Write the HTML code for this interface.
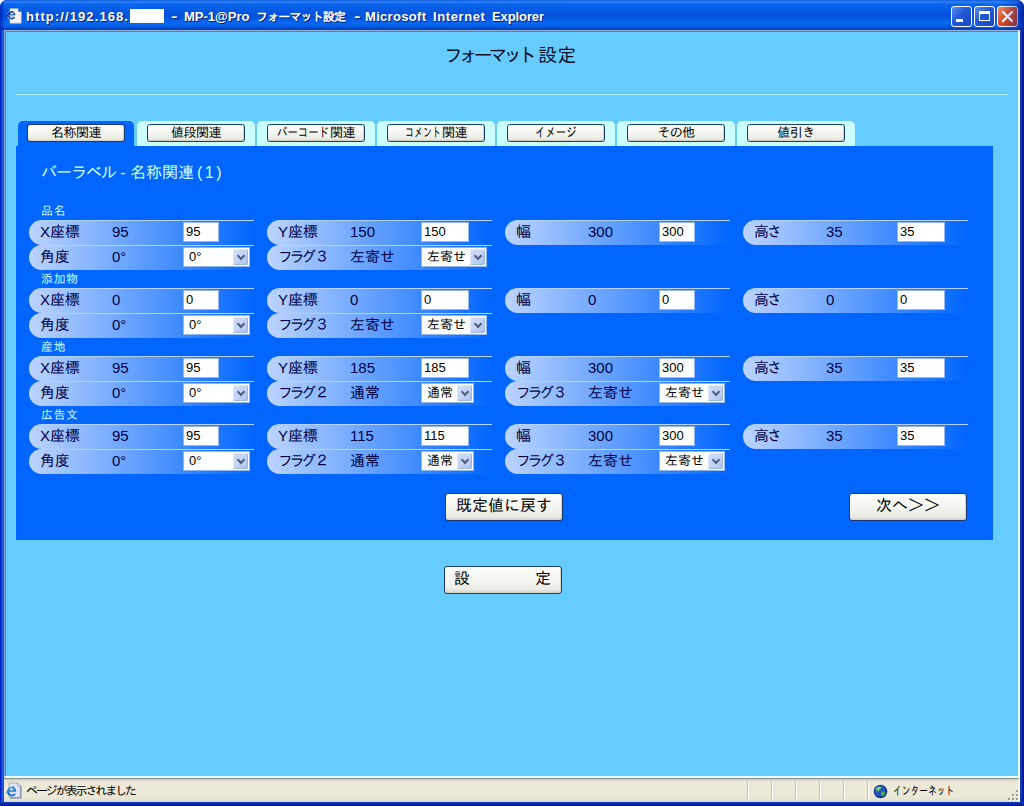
<!DOCTYPE html>
<html lang="ja">
<head>
<meta charset="utf-8">
<title>MP-1@Pro フォーマット設定</title>
<style>
*{margin:0;padding:0;box-sizing:border-box}
html,body{width:1024px;height:806px;overflow:hidden;background:#fff}
body{font-family:"Liberation Sans","IPAGothic",sans-serif;position:relative;color:#000}
.abs{position:absolute}
#win{position:absolute;left:0;top:0;width:1024px;height:806px;background:#0a3fd0;border-radius:7px 7px 0 0;overflow:hidden}
#tbar{position:absolute;left:0;top:0;width:1024px;height:30px;
 background:linear-gradient(180deg,#0a58d8 0%,#2a7af2 5%,#2a7af2 8%,#0866ee 14%,#0560e8 25%,#0353dc 45%,#0353dc 55%,#0560ea 68%,#0868f5 78%,#0660ea 86%,#0450d0 93%,#0340b0 100%)}
#ttext{position:absolute;left:0;top:9px;height:16px;line-height:16px;font-size:13px;font-weight:bold;color:#fff;white-space:nowrap;text-shadow:1px 1px 0 #0a1f7a}
#ttext span{position:absolute;top:0}
#tbar:after{content:"";position:absolute;right:0;top:0;width:22px;height:30px;background:linear-gradient(90deg,rgba(0,30,160,0) 0%,rgba(0,30,160,.25) 60%,rgba(0,20,140,.75) 100%)}
#tbar:before{content:"";position:absolute;left:0;top:0;width:5px;height:30px;background:linear-gradient(90deg,rgba(0,20,170,.7) 0%,rgba(0,30,160,0) 100%)}
#mask{position:absolute;left:130px;top:9px;width:34px;height:14px;background:#fff}
.wb{position:absolute;top:6px;width:21px;height:21px;border:1px solid #fff;border-radius:3px;background:linear-gradient(135deg,#5a8df5 0%,#2358d8 45%,#1a47c0 100%)}
#bclose{background:linear-gradient(135deg,#ee8a6a 0%,#d8502c 45%,#b8381a 100%)}
#lborder{position:absolute;left:0;top:30px;width:4px;height:776px;background:linear-gradient(90deg,#0020c8 0,#0020c8 1px,#0a3ad4 1px,#0a3ad4 2px,#2c60e0 2px,#2c60e0 3px,#1c50b8 3px)}
#rborder{position:absolute;left:1020px;top:30px;width:4px;height:776px;background:linear-gradient(90deg,#1038a8 0,#1038a8 1px,#123cb8 1px,#123cb8 2px,#0420a0 2px,#0420a0 3px,#001898 3px)}
#bborder{position:absolute;left:0;top:802px;width:1024px;height:4px;background:linear-gradient(180deg,#1038b0 0,#1038b0 1px,#0c30b0 1px,#0c30b0 2px,#0420a0 2px,#0420a0 3px,#0018a0 3px)}
#client{position:absolute;left:4px;top:30px;width:1016px;height:748px;background:#66ccff;border:1px solid #9db1d4;border-left-color:#8ab0e0;border-right:2px solid #e4ffff;border-bottom:2px solid #e8ffff;box-shadow:inset 1px 1px 0 #56809f}
#status{position:absolute;left:4px;top:778px;width:1016px;height:24px;background:linear-gradient(180deg,#c8c8b8 0,#e4e2d0 2px,#ece9d8 4px,#ece9d8 15px,#e8e5d4 20px,#dcdad4 22px,#d0d8f8 23px);border-top:1px solid #8c9088;border-right:2px solid #f4f6fc;font-size:12px}
.grip{width:2px;height:2px;background:#a09c8c;box-shadow:1px 1px 0 #fff,-4px 4px 0 #a09c8c,-3px 5px 0 #fff,0 4px 0 #a09c8c,1px 5px 0 #fff,-8px 8px 0 #a09c8c,-7px 9px 0 #fff,-4px 8px 0 #a09c8c,-3px 9px 0 #fff,0 8px 0 #a09c8c,1px 9px 0 #fff}
.sep{position:absolute;top:3px;width:2px;height:18px;border-left:1px solid #c5c2b2;border-right:1px solid #fff}
#title{position:absolute;left:444px;top:45px;font-size:19px;line-height:22px;white-space:nowrap;color:#0c0c24}
#title b{font-weight:normal;letter-spacing:-4.2px;margin-right:5.4px}
#hr{position:absolute;left:16px;top:93px;width:992px;height:2px;background:#b8f6ff;border-top:1px solid #78b2cc}
.tab{position:absolute;top:121px;width:118px;height:26px;background:#ccffff;border-radius:5px 5px 0 0}
.tab.on{background:#0066ff}
.btn{position:absolute;border:1px solid #1c3a6e;border-radius:3px;background:linear-gradient(180deg,#fcfcfa 0%,#f4f4f0 55%,#ebebe5 85%,#d6d6cc 100%);color:#000;text-align:center;white-space:nowrap;box-shadow:inset -1px -1px 0 #d8d4c4}
.tab .btn{left:10px;top:3px;width:98px;height:18px;font-size:13px;line-height:16px;letter-spacing:-.5px}
.tab.on .btn{left:9px}
.k{display:inline-block;white-space:nowrap;text-align:left;letter-spacing:0}
.k>span{display:inline-block;transform-origin:0 50%}
#panel{position:absolute;left:16px;top:146px;width:977px;height:394px;background:#0066ff}
#ptitle{position:absolute;left:25px;top:18px;font-size:16px;line-height:18px;color:#ccffff;white-space:nowrap}
.glabel{position:absolute;left:25px;margin-top:1px;font-size:12px;line-height:12px;letter-spacing:.5px;color:#ccffff;white-space:nowrap}
.row{position:absolute;width:225px;height:25px;border-top:1px solid #b4d4ff;border-radius:12.5px 0 0 12.5px;background:linear-gradient(90deg,#bcd4ff 0%,#0066ff 100%);font-size:15px;line-height:22px;color:#000044;white-space:nowrap}
.row span{position:absolute;top:0}
.row .l i{font-style:normal;margin-left:-2px}
.row b{font-weight:normal;letter-spacing:-3.5px;margin-right:2px}
.row .l{left:11px}
.row .v{left:83px}
.row input{position:absolute;left:154px;top:1px}
.tx{position:absolute;left:154px;top:1px;height:20px;width:36px;background:#fff;border:1px solid #93b7ea;font-size:13px;line-height:17px;padding-left:2px;color:#000}
.sel{position:absolute;left:154px;top:1px;height:20px;background:#fff;border:1px solid #93b7ea;font-size:13px;line-height:17px;padding-left:5px;color:#000}
.sel i{position:absolute;right:1px;top:1px;width:15px;height:16px;border-radius:2px;background:linear-gradient(135deg,#d3defa 0%,#c3d3f6 55%,#aabfea 100%);box-shadow:inset -1px -1px 0 #9fb5e2,inset 1px 1px 0 #dfe8fc}
.sel i:after{content:"";position:absolute;left:4.5px;top:3.5px;width:4px;height:4px;border-right:2px solid #4d6185;border-bottom:2px solid #4d6185;transform:rotate(45deg)}
</style>
</head>
<body>
<div id="win">
 <div id="tbar">
  <svg class="abs" style="left:5px;top:7px" width="18" height="18" viewBox="5 7 18 18"><path d="M9.8 8.6h8.4l3 3v11.6H9.8z" fill="#f2f2f0"/><path d="M18.2 8.6v3h3z" fill="#1a2a5a"/><path d="M18.6 9.2l.9 1h-.9z" fill="#fff"/><path d="M21.2 12v11.2H10.2" fill="none" stroke="#b8bcc8" stroke-width=".7"/><ellipse cx="10.600" cy="15.400" rx="3.600" ry="3.900" fill="#b4c4f4" opacity=".85"/><path d="M8.2 15.3h7.2c0-2.6-1.6-3.9-3.6-3.9-2.3 0-3.9 1.7-3.9 4.1 0 2.300 1.500 3.900 3.900 3.900 1.700 0 2.900-.8 3.500-2.200h-2.300c-.3.500-.7.700-1.300.700-1 0-1.600-.7-1.700-1.700z" fill="#1d55b0"/><path d="M10.100 14.200c.2-.9.800-1.400 1.700-1.400s1.500.5 1.600 1.400z" fill="#f2f2f0"/><path d="M6.800 17.200c.3-2.500 2.800-5.200 6.400-6" fill="none" stroke="#0d1f78" stroke-width="1.100"/><path d="M12.400 12.200c1-.4 2-.5 2.600-.2" fill="none" stroke="#7fb2ea" stroke-width=".9"/></svg>
  <div id="ttext"><span style="left:26px;letter-spacing:1.09px">http://192.168.</span><span style="left:171px;transform:scaleX(1.5);transform-origin:0 0">-</span><span style="left:184px">MP-1@Pro</span><span style="left:256px;font-size:12px;letter-spacing:-.85px">フォーマット設定</span><span style="left:354px;transform:scaleX(1.5);transform-origin:0 0">-</span><span style="left:365px;letter-spacing:.31px">Microsoft</span><span style="left:433px;letter-spacing:.6px">Internet</span><span style="left:492px;letter-spacing:-.1px">Explorer</span></div>
  <div id="mask"></div>
  <div class="wb" style="left:951px"><div class="abs" style="left:4px;top:12px;width:7px;height:3px;background:#fff"></div></div>
  <div class="wb" style="left:974px"><div class="abs" style="left:4px;top:4px;width:11px;height:10px;border:1px solid #fff;border-top-width:3px"></div></div>
  <div class="wb" id="bclose" style="left:997px"><svg class="abs" style="left:0;top:0" width="19" height="19"><path d="M5 5l9 9M14 5l-9 9" stroke="#fff" stroke-width="2.2" stroke-linecap="round"/></svg></div>
 </div>
 <div id="lborder"></div><div id="rborder"></div><div id="bborder"></div>
 <div id="client"></div>
 <div id="title"><b>フォーマット</b>設定</div>
 <div id="hr"></div>

 <div class="tab on" style="left:18px;width:116px"><div class="btn">名称関連</div></div>
 <div class="tab" style="left:137px"><div class="btn">値段関連</div></div>
 <div class="tab" style="left:257px"><div class="btn"><span class="k" style="width:53px"><span style="transform:scaleX(.8)">バーコード</span></span>関連</div></div>
 <div class="tab" style="left:377px"><div class="btn"><span class="k" style="width:37px"><span style="transform:scaleX(.69)">コメント</span></span>関連</div></div>
 <div class="tab" style="left:497px"><div class="btn"><span class="k" style="width:42px"><span style="transform:scaleX(.8)">イメージ</span></span></div></div>
 <div class="tab" style="left:617px"><div class="btn">その他</div></div>
 <div class="tab" style="left:737px"><div class="btn">値引き</div></div>

 <div id="panel">
  <div id="ptitle"><span style="letter-spacing:-1px">バーラベル</span><span style="display:inline-block;width:14px;text-align:center">-</span>名称関連<span style="letter-spacing:2.5px;margin-left:3px">(1)</span></div>
  <!--RS-->
  <div class="glabel" style="top:58px">品名</div>
  <div class="row" style="left:13px;top:74px"><span class="l">X座標</span><span class="v">95</span><div class="tx" style="width:36px">95</div></div>
  <div class="row" style="left:251px;top:74px"><span class="l">Y座標</span><span class="v">150</span><div class="tx" style="width:48px">150</div></div>
  <div class="row" style="left:489px;top:74px"><span class="l">幅</span><span class="v">300</span><div class="tx" style="width:36px">300</div></div>
  <div class="row" style="left:727px;top:74px"><span class="l">高<i>さ</i></span><span class="v">35</span><div class="tx" style="width:48px">35</div></div>
  <div class="row" style="left:13px;top:99px"><span class="l">角度</span><span class="v">0°</span><div class="sel deg" style="width:67px">0°<i></i></div></div>
  <div class="row" style="left:251px;top:99px"><span class="l"><b>フラグ</b>３</span><span class="v">左寄せ</span><div class="sel" style="width:66px">左寄せ<i></i></div></div>
  <div class="glabel" style="top:126px">添加物</div>
  <div class="row" style="left:13px;top:142px"><span class="l">X座標</span><span class="v">0</span><div class="tx" style="width:36px">0</div></div>
  <div class="row" style="left:251px;top:142px"><span class="l">Y座標</span><span class="v">0</span><div class="tx" style="width:48px">0</div></div>
  <div class="row" style="left:489px;top:142px"><span class="l">幅</span><span class="v">0</span><div class="tx" style="width:36px">0</div></div>
  <div class="row" style="left:727px;top:142px"><span class="l">高<i>さ</i></span><span class="v">0</span><div class="tx" style="width:48px">0</div></div>
  <div class="row" style="left:13px;top:167px"><span class="l">角度</span><span class="v">0°</span><div class="sel deg" style="width:67px">0°<i></i></div></div>
  <div class="row" style="left:251px;top:167px"><span class="l"><b>フラグ</b>３</span><span class="v">左寄せ</span><div class="sel" style="width:66px">左寄せ<i></i></div></div>
  <div class="glabel" style="top:194px">産地</div>
  <div class="row" style="left:13px;top:210px"><span class="l">X座標</span><span class="v">95</span><div class="tx" style="width:36px">95</div></div>
  <div class="row" style="left:251px;top:210px"><span class="l">Y座標</span><span class="v">185</span><div class="tx" style="width:48px">185</div></div>
  <div class="row" style="left:489px;top:210px"><span class="l">幅</span><span class="v">300</span><div class="tx" style="width:36px">300</div></div>
  <div class="row" style="left:727px;top:210px"><span class="l">高<i>さ</i></span><span class="v">35</span><div class="tx" style="width:48px">35</div></div>
  <div class="row" style="left:13px;top:235px"><span class="l">角度</span><span class="v">0°</span><div class="sel deg" style="width:67px">0°<i></i></div></div>
  <div class="row" style="left:251px;top:235px"><span class="l"><b>フラグ</b>２</span><span class="v">通常</span><div class="sel" style="width:53px">通常<i></i></div></div>
  <div class="row" style="left:489px;top:235px"><span class="l"><b>フラグ</b>３</span><span class="v">左寄せ</span><div class="sel" style="width:66px">左寄せ<i></i></div></div>
  <div class="glabel" style="top:262px">広告文</div>
  <div class="row" style="left:13px;top:278px"><span class="l">X座標</span><span class="v">95</span><div class="tx" style="width:36px">95</div></div>
  <div class="row" style="left:251px;top:278px"><span class="l">Y座標</span><span class="v">115</span><div class="tx" style="width:48px">115</div></div>
  <div class="row" style="left:489px;top:278px"><span class="l">幅</span><span class="v">300</span><div class="tx" style="width:36px">300</div></div>
  <div class="row" style="left:727px;top:278px"><span class="l">高<i>さ</i></span><span class="v">35</span><div class="tx" style="width:48px">35</div></div>
  <div class="row" style="left:13px;top:303px"><span class="l">角度</span><span class="v">0°</span><div class="sel deg" style="width:67px">0°<i></i></div></div>
  <div class="row" style="left:251px;top:303px"><span class="l"><b>フラグ</b>２</span><span class="v">通常</span><div class="sel" style="width:53px">通常<i></i></div></div>
  <div class="row" style="left:489px;top:303px"><span class="l"><b>フラグ</b>３</span><span class="v">左寄せ</span><div class="sel" style="width:66px">左寄せ<i></i></div></div>
  <!--RE-->
  <div class="btn" style="left:429px;top:347px;width:118px;height:28px;font-size:16px;line-height:24px">既定値に戻す</div>
  <div class="btn" style="left:833px;top:347px;width:118px;height:28px;font-size:16px;line-height:24px">次へ＞＞</div>
 </div>
 <div class="btn" style="left:444px;top:566px;width:118px;height:28px;font-size:16px;line-height:24px;text-align:left;padding-left:9px">設<span style="display:inline-block;width:65px"></span>定</div>

 <div id="status">
  <svg class="abs" style="left:1px;top:2px" width="19" height="19" viewBox="5 781 19 19"><path d="M10 783.500h8.500l3 3v12H10z" fill="#8088a8"/><path d="M9.300 783h8.200l2.800 2.800v11.700H9.300z" fill="#dfe6fa" stroke="#7a86ac" stroke-width=".6"/><path d="M17.500 783v2.800h2.800" fill="#fff" stroke="#7a86ac" stroke-width=".6"/><path d="M7.600 791.700h8.600c0-3.200-1.900-4.900-4.400-4.900-2.700 0-4.700 2-4.700 4.900 0 2.800 1.900 4.700 4.700 4.700 2 0 3.500-1 4.200-2.600h-2.600c-.4.500-.9.800-1.600.800-1.200 0-2-.8-2.100-2z" fill="#2a78c4"/><path d="M9.800 790.300c.2-1.100 1-1.700 2-1.700 1.100 0 1.800.6 1.900 1.700z" fill="#dfe6fa"/><path d="M6.300 793.600c.2-2.900 3-6.200 7.600-7" fill="none" stroke="#3c98d8" stroke-width="1"/><path d="M9.600 789c.8-.9 1.700-1.300 2.600-1.300" fill="none" stroke="#a8e8ff" stroke-width=".9"/></svg>
  <div class="abs" style="left:22px;top:5px;line-height:14px;letter-spacing:-2.1px;white-space:nowrap">ページが表示されました</div>
  <div class="sep" style="left:743px"></div><div class="sep" style="left:767px"></div><div class="sep" style="left:791px"></div><div class="sep" style="left:815px"></div><div class="sep" style="left:839px"></div><div class="sep" style="left:863px"></div>
  <svg class="abs" style="left:869px;top:5px" width="15" height="15" viewBox="0 0 15 15"><circle cx="7.500" cy="7.500" r="6.800" fill="#16308c"/><circle cx="6.800" cy="6.800" r="5.600" fill="#2450c0"/><path d="M3 4.500c1.500-2 4-2.500 5.500-1.500 1 .8-.5 2-1.500 2.500s-.5 2-2 2-2.800-1.500-2-3zM8.500 8c1.500-.8 3.500-.3 3.800.8s-1 3-2.500 3.500-2.300-3.300-1.300-4.300z" fill="#48b048"/><ellipse cx="5.500" cy="4.500" rx="2" ry="1.300" fill="#9fd8f0" opacity=".7"/></svg>
  <div class="abs" style="left:889px;top:5px;line-height:14px;white-space:nowrap;transform:scaleX(.73);transform-origin:0 0">インターネット</div>
  <div class="abs grip" style="left:1012px;top:11px"></div>
 </div>
</div>
</body>
</html>
